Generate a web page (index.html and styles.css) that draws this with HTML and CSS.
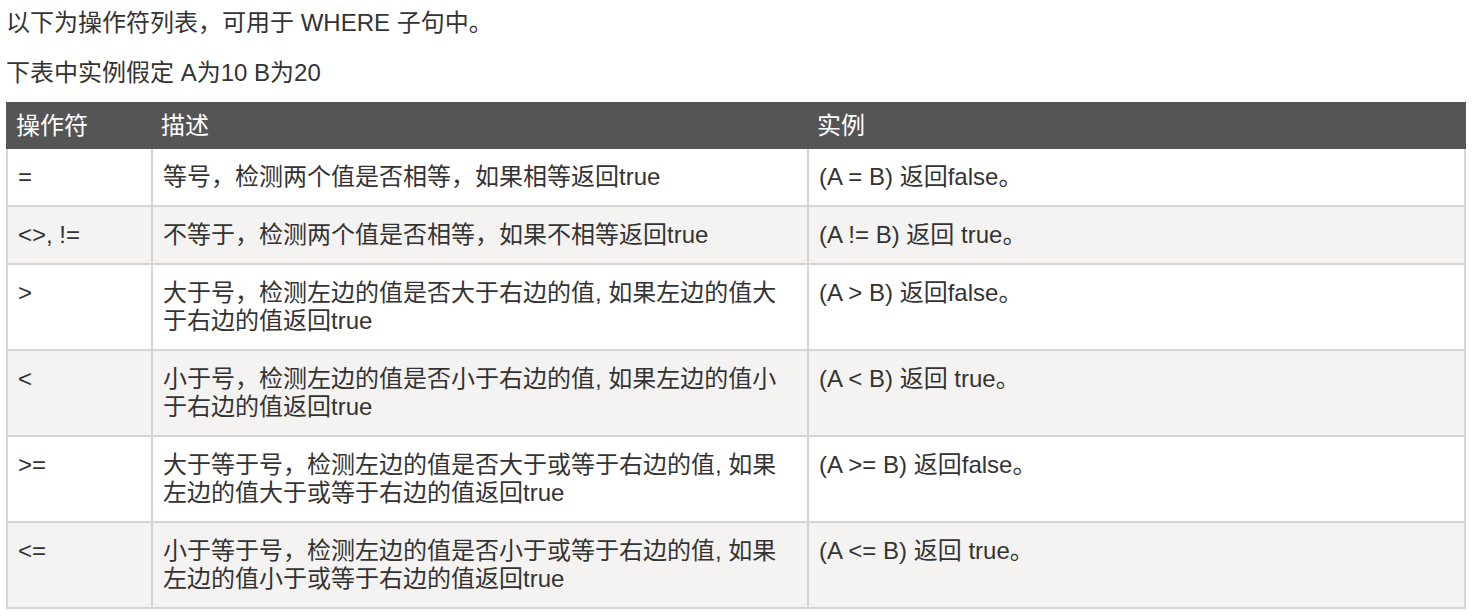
FILE: index.html
```html
<!DOCTYPE html>
<html lang="zh-CN">
<head>
<meta charset="utf-8">
<title>WHERE 子句操作符</title>
<link rel="stylesheet" href="styles.css">
</head>
<body>
<p class="intro first">以下为操作符列表，可用于 WHERE 子句中。</p>
<p class="intro second">下表中实例假定 A为10 B为20</p>
<table class="ops">
  <colgroup>
    <col class="c-op">
    <col class="c-desc">
    <col class="c-ex">
  </colgroup>
  <thead>
    <tr><th>操作符</th><th>描述</th><th>实例</th></tr>
  </thead>
  <tbody>
    <tr><td>=</td><td>等号，检测两个值是否相等，如果相等返回true</td><td>(A = B) 返回false。</td></tr>
    <tr><td>&lt;&gt;, !=</td><td>不等于，检测两个值是否相等，如果不相等返回true</td><td>(A != B) 返回 true。</td></tr>
    <tr><td>&gt;</td><td>大于号，检测左边的值是否大于右边的值, 如果左边的值大于右边的值返回true</td><td>(A &gt; B) 返回false。</td></tr>
    <tr><td>&lt;</td><td>小于号，检测左边的值是否小于右边的值, 如果左边的值小于右边的值返回true</td><td>(A &lt; B) 返回 true。</td></tr>
    <tr><td>&gt;=</td><td>大于等于号，检测左边的值是否大于或等于右边的值, 如果左边的值大于或等于右边的值返回true</td><td>(A &gt;= B) 返回false。</td></tr>
    <tr><td>&lt;=</td><td>小于等于号，检测左边的值是否小于或等于右边的值, 如果左边的值小于或等于右边的值返回true</td><td>(A &lt;= B) 返回 true。</td></tr>
  </tbody>
</table>
</body>
</html>
```

FILE: styles.css
```css
html, body {
  background: #ffffff;
}
body {
  margin: 0;
  padding: 0 8px 0 6px;
  font-family: "Liberation Sans", "Noto Sans CJK SC", sans-serif;
  color: #333333;
  font-size: 24px;
}
.intro {
  margin: 0;
  line-height: 34px;
}
.intro.first {
  margin-top: 6px;
}
.intro.second {
  margin-top: 16px;
  margin-bottom: 12px;
}
.ops {
  width: 1460px;
  border-collapse: collapse;
  table-layout: fixed;
  font-size: 24px;
  line-height: 28px;
}
.c-op { width: 145px; }
.c-desc { width: 656px; }
.ops th {
  background: #555555;
  color: #ffffff;
  font-weight: normal;
  text-align: left;
  padding: 8px 8px 7px;
  border: 2px solid #555555;
}
.ops td {
  padding: 14px 10px;
  border: 2px solid #d4d4d4;
  vertical-align: top;
}
.ops tbody tr:nth-child(even) td {
  background: #f4f3f1;
}
```
